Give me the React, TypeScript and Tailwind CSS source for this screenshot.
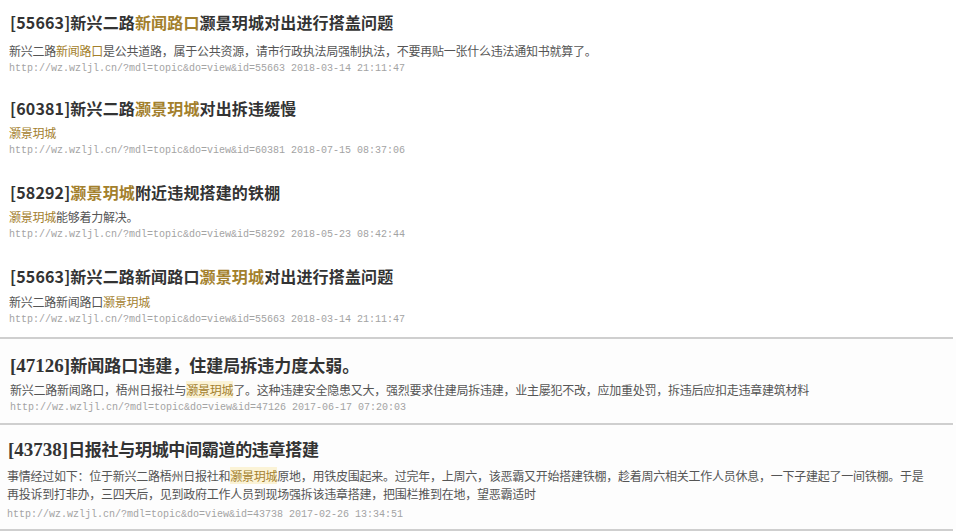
import React from "react";

const H = ({ children, bg }: { children: React.ReactNode; bg?: boolean }) => (
  <span className={bg ? "text-[#a3802c] bg-[#fbf3d6]" : "text-[#a3802c]"}>{children}</span>
);

const titleCls =
  "text-[16px] leading-[24px] font-bold text-[#333] whitespace-nowrap tracking-[0.15px]";
const descCls = "text-[12px] leading-[18px] text-[#555] tracking-[-0.25px]";
const urlCls =
  "text-[10px] leading-[18px] text-[#a3a3a3] whitespace-nowrap";
const mono = { fontFamily: '"Liberation Mono", "DejaVu Sans Mono", monospace' };
const sans = '"Noto Sans CJK SC", "Noto Sans", sans-serif';

export default function App() {
  return (
    <div
      className="w-[956px] h-[532px] bg-white overflow-hidden flex flex-col"
      style={{ fontFamily: sans }}
    >
      {/* Block 1 */}
      <div className="h-[84px] pl-[10px] pt-[10px] flex flex-col">
        <div className={titleCls}>
          [55663]新兴二路<H>新闻路口</H>灏景玥城对出进行搭盖问题
        </div>
        <div className={descCls + " mt-[8px] -ml-[1px]"}>
          新兴二路<H>新闻路口</H>是公共道路，属于公共资源，请市行政执法局强制执法，不要再贴一张什么违法通知书就算了。
        </div>
        <div className={urlCls + " -ml-[1px]"} style={mono}>
          http://wz.wzljl.cn/?mdl=topic&amp;do=view&amp;id=55663 2018-03-14 21:11:47
        </div>
      </div>

      {/* Block 2 */}
      <div className="h-[84px] pl-[10px] pt-[12px] flex flex-col">
        <div className={titleCls}>
          [60381]新兴二路<H>灏景玥城</H>对出拆违缓慢
        </div>
        <div className={descCls + " mt-[4px] -ml-[1px]"}>
          <H>灏景玥城</H>
        </div>
        <div className={urlCls + " -ml-[1px]"} style={mono}>
          http://wz.wzljl.cn/?mdl=topic&amp;do=view&amp;id=60381 2018-07-15 08:37:06
        </div>
      </div>

      {/* Block 3 */}
      <div className="h-[84px] pl-[10px] pt-[12px] flex flex-col">
        <div className={titleCls}>
          [58292]<H>灏景玥城</H>附近违规搭建的铁棚
        </div>
        <div className={descCls + " mt-[4px] -ml-[1px]"}>
          <H>灏景玥城</H>能够着力解决。
        </div>
        <div className={urlCls + " -ml-[1px]"} style={mono}>
          http://wz.wzljl.cn/?mdl=topic&amp;do=view&amp;id=58292 2018-05-23 08:42:44
        </div>
      </div>

      {/* Block 4 */}
      <div className="h-[85px] pl-[10px] pt-[12px] flex flex-col">
        <div className={titleCls}>
          [55663]新兴二路新闻路口<H>灏景玥城</H>对出进行搭盖问题
        </div>
        <div className={descCls + " mt-[5px] -ml-[1px]"}>
          新兴二路新闻路口<H>灏景玥城</H>
        </div>
        <div className={urlCls + " -ml-[1px]"} style={mono}>
          http://wz.wzljl.cn/?mdl=topic&amp;do=view&amp;id=55663 2018-03-14 21:11:47
        </div>
      </div>

      <div className="h-[2px] bg-[#cfcfcf] mr-[3px] shrink-0" />

      {/* Block 5 */}
      <div className="h-[84px] pl-[10px] pt-[14px] flex flex-col bg-[#fdfdfd]">
        <div
          className="text-[17px] leading-[24px] font-bold text-[#333] whitespace-nowrap"
          style={{ fontFamily: sans }}
        >
          <span className="text-[19px]" style={{ fontFamily: '"Liberation Serif", serif' }}>
            [47126]
          </span>
          新闻路口违建，住建局拆违力度太弱。
        </div>
        <div className={descCls + " mt-[3px] tracking-[-0.05px] text-[#5a5a5a]"}>
          新兴二路新闻路口，梧州日报社与<H bg>灏景玥城</H>了。这种违建安全隐患又大，强烈要求住建局拆违建，业主屡犯不改，应加重处罚，拆违后应扣走违章建筑材料
        </div>
        <div className={urlCls} style={mono}>
          http://wz.wzljl.cn/?mdl=topic&amp;do=view&amp;id=47126 2017-06-17 07:20:03
        </div>
      </div>

      <div className="h-[2px] bg-[#cfcfcf] mr-[3px] shrink-0" />

      {/* Block 6 */}
      <div className="h-[104px] pl-[8px] pr-[10px] pt-[12px] flex flex-col bg-[#fdfdfd]">
        <div
          className="text-[17px] leading-[24px] font-bold text-[#333] whitespace-nowrap tracking-[-0.3px]"
          style={{ fontFamily: sans }}
        >
          <span className="text-[19px] tracking-[0px]" style={{ fontFamily: '"Liberation Serif", serif' }}>
            [43738]
          </span>
          日报社与玥城中间霸道的违章搭建
        </div>
        <div className={descCls + " mt-[5px] -ml-[1px] tracking-[-0.05px] text-[#5a5a5a]"}>
          <div className="whitespace-nowrap">
            事情经过如下：位于新兴二路梧州日报社和<H bg>灏景玥城</H>原地，用铁皮围起来。过完年，上周六，该恶霸又开始搭建铁棚，趁着周六相关工作人员休息，一下子建起了一间铁棚。于是
          </div>
          <div className="whitespace-nowrap">
            再投诉到打非办，三四天后，见到政府工作人员到现场强拆该违章搭建，把围栏推到在地，望恶霸适时
          </div>
        </div>
        <div className={urlCls + " mt-[3px] -ml-[1px]"} style={mono}>
          http://wz.wzljl.cn/?mdl=topic&amp;do=view&amp;id=43738 2017-02-26 13:34:51
        </div>
      </div>

      <div className="h-[2px] bg-[#cfcfcf] mr-[3px] shrink-0" />
    </div>
  );
}
